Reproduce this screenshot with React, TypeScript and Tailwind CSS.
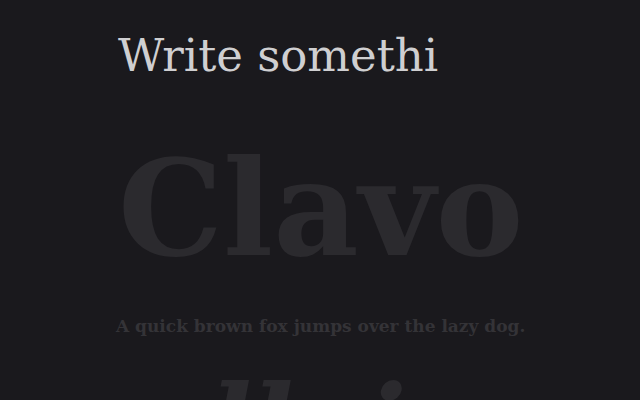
import React from "react";

export default function App() {
  return (
    <div className="w-[640px] h-[400px] overflow-hidden bg-[#1a191d] flex flex-col pl-[118px] font-['DejaVu_Serif',serif]">
      <div className="mt-[28px] text-[45px] leading-[56px] text-[#cfcfd1] whitespace-nowrap">
        Write somethi
      </div>
      <div className="mt-[50px] text-[132px] leading-[150px] font-bold text-[#2b2a2e] whitespace-nowrap">
        Clavo
      </div>
      <div className="mt-[30px] -ml-[2px] text-[17px] leading-[24px] font-bold text-[#343337] whitespace-nowrap">
        A quick brown fox jumps over the lazy dog.
      </div>
      <div className="mt-[28px] pl-[92px] text-[110px] leading-[120px] font-bold italic text-[#2b2a2e] whitespace-nowrap">
        llai
      </div>
    </div>
  );
}
